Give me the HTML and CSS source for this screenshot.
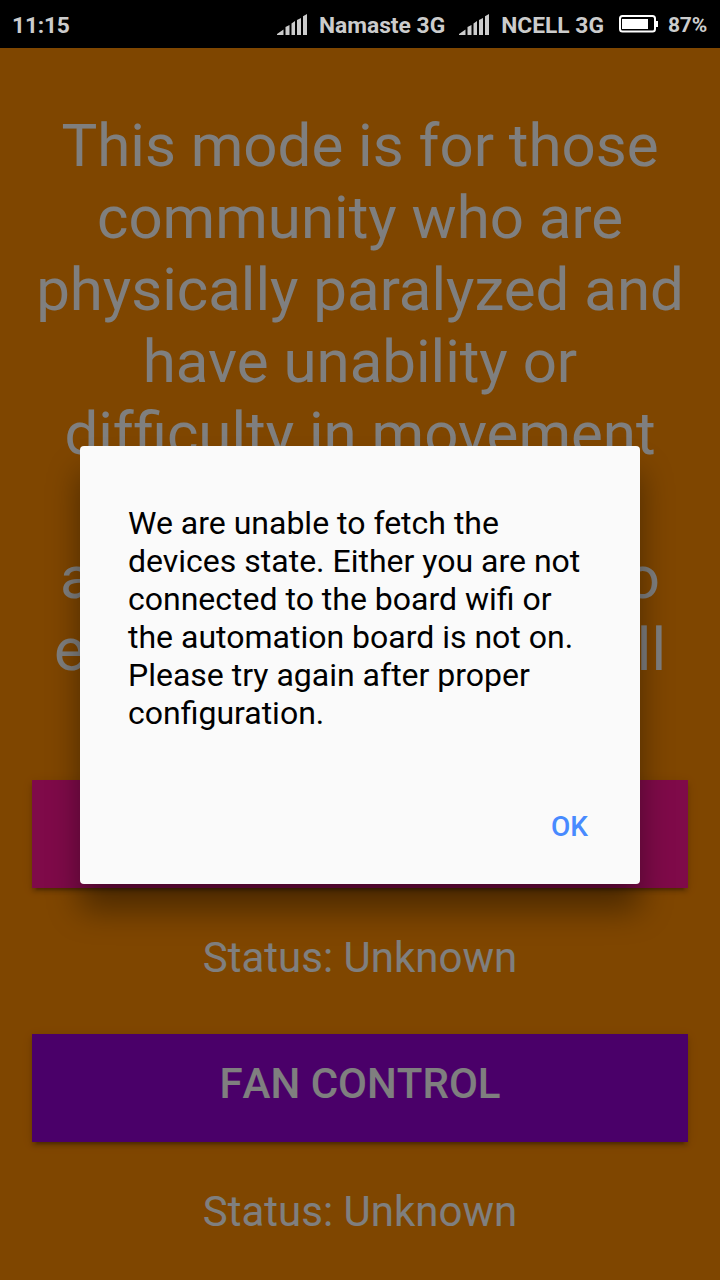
FILE: index.html
```html
<!DOCTYPE html>
<html lang="en">
<head>
<meta charset="utf-8">
<title>Home automation</title>
<link rel="stylesheet" href="styles.css">
</head>
<body>
<div class="screen">
  <header class="statusbar">
    <span class="clock">11:15</span>
    <svg class="signal" width="30" height="21" viewBox="0 0 30 21"><path d="M0 21V20L6.500 15.500V21ZM8.500 21V13L12.500 11V21ZM14.500 21V9.500L18 7V21ZM20 21V6L24 4V21ZM26 21V2.200L30 0V21Z"/></svg>
    <span class="carrier">Namaste 3G</span>
    <svg class="signal second" width="30" height="21" viewBox="0 0 30 21"><path d="M0 21V20L6.500 15.500V21ZM8.500 21V13L12.500 11V21ZM14.500 21V9.500L18 7V21ZM20 21V6L24 4V21ZM26 21V2.200L30 0V21Z"/></svg>
    <span class="carrier ncell">NCELL 3G</span>
    <svg class="battery" width="40" height="18" viewBox="0 0 40 18"><rect x="1" y="1" width="35" height="15.500" rx="2.500" fill="none" stroke="#fff" stroke-width="2"/><rect x="3" y="4" width="26" height="10" fill="#fff"/><path d="M37 6H39V12H37Z" fill="#fff"/></svg>
    <span class="percent">87%</span>
  </header>
  <main class="content">
    <div class="intro">
      <p>This mode is for those</p>
      <p>community who are</p>
      <p>physically paralyzed and</p>
      <p>have unability or</p>
      <p>dif&zwnj;ficulty in movement</p>
      <p class="split gap"><span>a</span><span>o</span></p>
      <p class="split wide"><span>e</span><span>ll</span></p>
    </div>
    <button class="control light"></button>
    <p class="state">Status: Unknown</p>
    <button class="control fan">FAN CONTROL</button>
    <p class="state">Status: Unknown</p>
  </main>
  <div class="overlay">
    <section class="dialog" role="alertdialog">
      <p class="message">We are unable to fetch the<br>devices state. Either you are not<br>connected to the board wifi or<br>the automation board is not on.<br>Please try again after proper<br>configuration.</p>
      <button class="ok">OK</button>
    </section>
  </div>
</div>
</body>
</html>
```
FILE: styles.css
```css
* { box-sizing: border-box; }
body { margin: 0; font-family: Roboto, sans-serif; }
p { margin: 0; }
button { border: 0; font-family: inherit; font-weight: 500; padding: 0; }

.screen {
  position: relative;
  width: 720px;
  height: 1280px;
  overflow: hidden;
  background: #ff8c00;
}

.statusbar {
  display: flex;
  align-items: center;
  height: 48px;
  padding: 2px 13px 0 12px;
  background: #000;
  color: #ccc;
  font-size: 22.8px;
  font-weight: 700;
  white-space: nowrap;
}
.clock { margin-right: auto; letter-spacing: -.2px; }
.signal { fill: #ccc; margin: 0 12px 2px 0; }
.second { margin-left: 14px; }
.battery { margin: 0 9px 2px 15px; }
.percent { font-size: 21px; font-weight: 700; letter-spacing: -.2px; }

.content { padding: 62px 32px 0; color: #fff; text-align: center; }
.intro { height: 670px; font-size: 60px; line-height: 72px; white-space: nowrap; }
.split { display: flex; justify-content: space-between; padding: 0 28px; }
.gap { margin-top: 72px; }
.wide { padding: 0 22px; }

.control {
  display: block;
  width: 656px;
  height: 108px;
  padding-bottom: 10px;
  color: #fff;
  font-size: 42px;
  font-kerning: none;
  box-shadow: 0 4px 4px rgba(0, 0, 0, .14), 0 6px 2px -4px rgba(0, 0, 0, .2), 0 2px 10px rgba(0, 0, 0, .12);
}
.light { background: #ff1493; }
.fan { background: #9400d3; }
.state { height: 146px; padding-top: 45px; font-size: 42px; line-height: 50px; }

.overlay {
  position: absolute;
  inset: 48px 0 0;
  display: flex;
  align-items: center;
  justify-content: center;
  padding-top: 2px;
  background: rgba(0, 0, 0, .5);
}
.dialog {
  display: flex;
  flex-direction: column;
  width: 560px;
  height: 438px;
  padding: 58px 48px 0;
  border-radius: 4px;
  background: #fafafa;
  box-shadow: 0 26px 32px rgba(0, 0, 0, .4);
}
.message { font-size: 32px; line-height: 38px; white-space: nowrap; }
.ok {
  align-self: flex-end;
  margin: 78px 4px 0 0;
  background: transparent;
  color: #488aff;
  font-size: 28px;
  line-height: 34px;
}
```
